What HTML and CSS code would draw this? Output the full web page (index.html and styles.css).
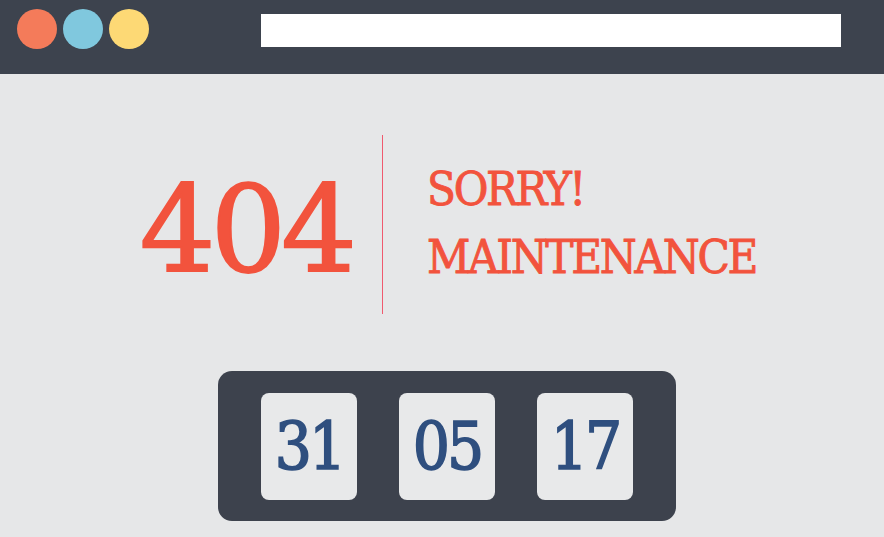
FILE: index.html
```html
<!DOCTYPE html>
<html>
<head>
<meta charset="utf-8">
<link rel="stylesheet" href="styles.css">
</head>
<body>
<header class="topbar">
  <div class="dots">
    <span class="dot dot-red"></span>
    <span class="dot dot-blue"></span>
    <span class="dot dot-yellow"></span>
  </div>
  <div class="address"></div>
</header>
<main class="content">
  <section class="hero">
    <div class="code">404</div>
    <div class="divider"></div>
    <div class="message">
      <div class="line">SORRY!</div>
      <div class="line">MAINTENANCE</div>
    </div>
  </section>
  <section class="counter">
    <div class="card">31</div>
    <div class="card">05</div>
    <div class="card">17</div>
  </section>
</main>
</body>
</html>
```
FILE: styles.css
```css
html, body {
  margin: 0;
  padding: 0;
}
body {
  width: 884px;
  height: 537px;
  overflow: hidden;
  background: #e6e7e8;
  font-family: "DejaVu Serif", serif;
}
.topbar {
  height: 74px;
  background: #3d434e;
  display: flex;
  align-items: flex-start;
  box-sizing: border-box;
  padding: 9px 43px 0 17px;
}
.dots {
  display: flex;
  gap: 6px;
}
.dot {
  width: 40px;
  height: 40px;
  border-radius: 50%;
  display: block;
}
.dot-red { background: #f47b5a; }
.dot-blue { background: #80c8de; }
.dot-yellow { background: #fdd975; }
.address {
  margin-left: 112px;
  margin-top: 5px;
  flex: 1;
  height: 33px;
  background: #ffffff;
}
.content {
  display: flex;
  flex-direction: column;
  align-items: flex-start;
}
.hero {
  display: flex;
  align-items: center;
  margin-top: 61px;
  margin-left: 130px;
  height: 179px;
}
.code {
  font-size: 119px;
  color: #f2533d;
  -webkit-text-stroke: 2px #f2533d;
  line-height: 1;
  width: 252px;
  box-sizing: border-box;
  padding-right: 30px;
  text-align: right;
  margin-top: 12px;
  letter-spacing: -5px;
}
.divider {
  width: 1px;
  align-self: stretch;
  background: #f05a6e;
  margin-right: 44px;
}
.message {
  color: #f2533d;
  -webkit-text-stroke: 0.9px #f2533d;
  font-size: 47px;
  font-stretch: condensed;
  line-height: 68px;
  margin-top: -4px;
  letter-spacing: -2.3px;
}
.counter {
  margin-top: 57px;
  margin-left: 218px;
  width: 458px;
  height: 150px;
  box-sizing: border-box;
  background: #3d424d;
  border-radius: 14px;
  display: flex;
  justify-content: center;
  align-items: center;
  gap: 42px;
}
.card {
  width: 96px;
  height: 107px;
  background: #e8e9ea;
  border-radius: 8px;
  color: #2f4f7f;
  -webkit-text-stroke: 1.6px #2f4f7f;
  font-size: 65px;
  font-stretch: condensed;
  letter-spacing: -3px;
  display: flex;
  align-items: center;
  justify-content: center;
}
```
